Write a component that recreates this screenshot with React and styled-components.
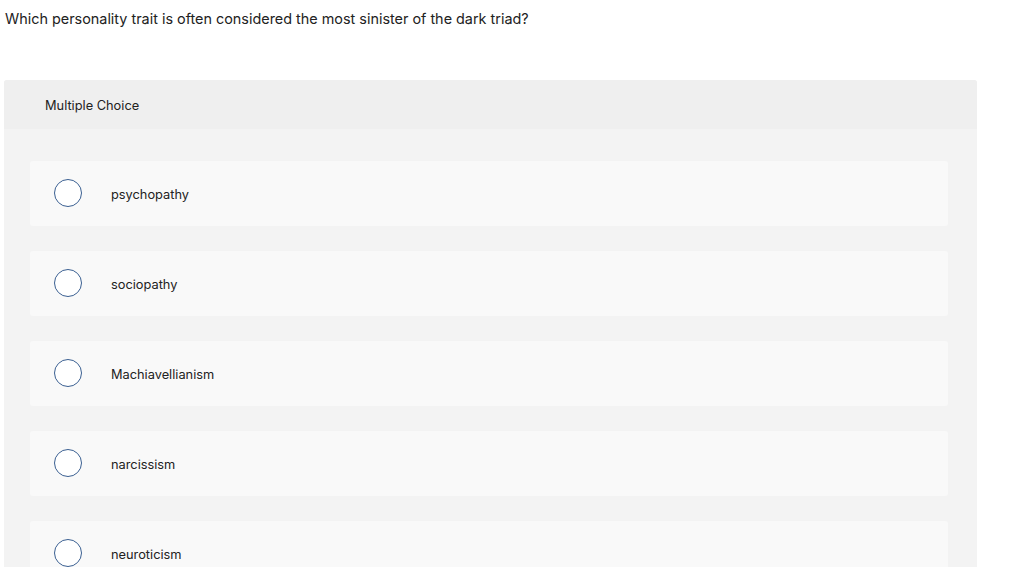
import React from "react";
import styled, { createGlobalStyle } from "styled-components";

const Global = createGlobalStyle`
  html, body { margin: 0; padding: 0; background: #fff; }
  body { font-family: "Inter", "Liberation Sans", sans-serif; color: #222; }
`;

const Page = styled.div`
  height: 587px;
  overflow: hidden;
  padding: 10px 0 0 0;
  box-sizing: border-box;
`;

const Question = styled.p`
  margin: 0 0 0 5px;
  font-size: 14.4px;
  line-height: 18px;
  color: #222;
`;

const Panel = styled.section`
  margin: 52px 0 0 4px;
  width: 973px;
  height: 487px;
  overflow: hidden;
  background: #f3f3f3;
  border-radius: 3px 3px 0 0;
`;

const Header = styled.div`
  height: 49px;
  box-sizing: border-box;
  padding: 2px 0 0 41px;
  background: #efefef;
  display: flex;
  align-items: center;
  font-size: 12.8px;
  color: #222;
`;

const List = styled.div`
  display: flex;
  flex-direction: column;
  gap: 25px;
  padding: 32px 29px 0 26px;
`;

const Option = styled.label`
  height: 65px;
  background: #f9f9f9;
  border-radius: 3px;
  display: flex;
  align-items: center;
  flex-shrink: 0;
`;

const Radio = styled.span`
  width: 26px;
  height: 26px;
  border: 1px solid #3a5f91;
  border-radius: 50%;
  background: #fff;
  margin: -1px 0 0 24px;
  flex-shrink: 0;
`;

const OptionText = styled.span`
  margin-left: 29px;
  padding-top: 2px;
  font-size: 12.8px;
  color: #222;
`;

const options = ["psychopathy", "sociopathy", "Machiavellianism", "narcissism", "neuroticism"];

export default function App() {
  return (
    <Page>
      <Global />
      <Question>Which personality trait is often considered the most sinister of the dark triad?</Question>
      <Panel>
        <Header>Multiple Choice</Header>
        <List>
          {options.map((o) => (
            <Option key={o}>
              <Radio />
              <OptionText>{o}</OptionText>
            </Option>
          ))}
        </List>
      </Panel>
    </Page>
  );
}
